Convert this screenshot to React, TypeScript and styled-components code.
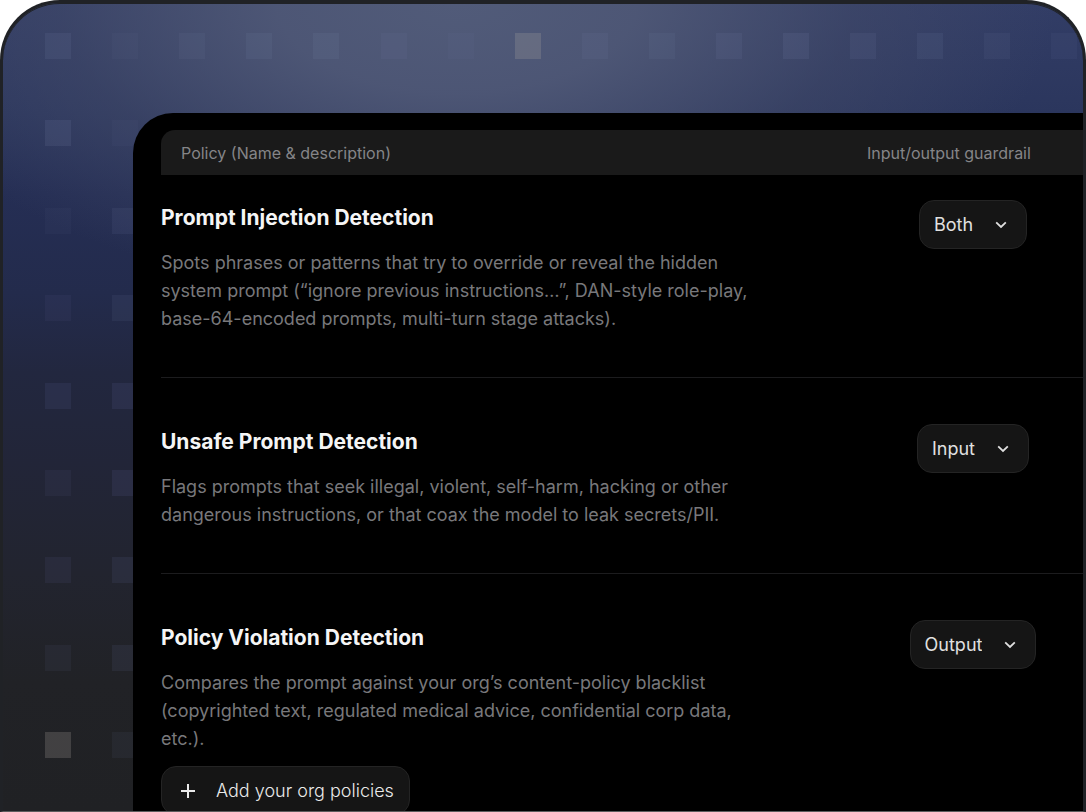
import React from "react";
import styled, { createGlobalStyle } from "styled-components";

const GlobalStyle = createGlobalStyle`
  * { box-sizing: border-box; }
  body {
    margin: 0;
    background: #ffffff;
    font-family: "Inter", "Liberation Sans", sans-serif;
  }
`;

const Card = styled.main`
  position: relative;
  height: 100vh;
  overflow: hidden;
  padding: 110px 0 0 130px;
  border: 3px solid #202226;
  border-bottom: 1px solid #5c5c5c;
  border-radius: 60px 60px 0 0;
  box-shadow: inset 0 1px 0 #202226;
  background:
    radial-gradient(ellipse 600px 300px at 42% 0, #515b79 0%, rgba(80, 89, 119, 0.9) 30%, rgba(68, 76, 106, 0.5) 66%, rgba(50, 60, 100, 0) 100%),
    linear-gradient(#323d66 0, #2b365d 110px, #252e54 190px, #232b4c 290px, #22273f 370px, #222538 460px, #22242f 570px, #212226 680px, #202124 100%);
`;

const Squares = styled.svg`
  position: absolute;
  inset: 0;
  width: 100%;
  height: 100%;
`;

const Panel = styled.section`
  position: relative;
  height: 100%;
  padding: 17px 0 0 28px;
  border-top-left-radius: 40px;
  background: #000000;
`;

const PolicyTable = styled.table`
  width: 100%;
  table-layout: fixed;
  border-collapse: separate;
  border-spacing: 0;
`;

const HeadCell = styled.th<{ $side?: boolean }>`
  width: ${(p) => (p.$side ? "220px" : "auto")};
  height: 45px;
  padding: ${(p) => (p.$side ? "0 0 0 4px" : "0 0 0 20px")};
  border-top-left-radius: ${(p) => (p.$side ? "0" : "14px")};
  background: #1a1a1a;
  color: #858588;
  font-size: 16px;
  font-weight: 400;
  line-height: 24px;
  text-align: left;
`;

const Cell = styled.td<{ $first: boolean; $last: boolean }>`
  padding: ${(p) => (p.$first ? "25px" : "46px")} 0 44px;
  border-bottom: ${(p) => (p.$last ? "0" : "1px solid #1c1c1e")};
  vertical-align: top;
`;

const ChoiceCell = styled(Cell)`
  text-align: center;
`;

const Title = styled.h2`
  margin: 4px 0 17px;
  color: #f5f5f5;
  font-size: 21px;
  font-weight: 650;
  line-height: 28px;
`;

const Description = styled.p`
  margin: 0;
  color: #78787b;
  font-size: 18px;
  font-weight: 400;
  line-height: 28px;
  white-space: pre-line;
`;

const SelectBox = styled.label`
  position: relative;
  display: inline-block;
  color: #e0e0e0;
`;

const Select = styled.select`
  appearance: none;
  field-sizing: content;
  display: block;
  height: 49px;
  padding: 0 53px 0 14px;
  border: 1px solid #242424;
  border-radius: 15px;
  background: #151515;
  color: inherit;
  font: 400 18px/28px "Inter", "Liberation Sans", sans-serif;
`;

const Chevron = styled.svg`
  position: absolute;
  top: 20px;
  right: 20px;
  pointer-events: none;
`;

const AddButton = styled.button`
  display: flex;
  align-items: center;
  gap: 20px;
  height: 49px;
  margin-top: 13px;
  padding: 0 15px 0 18px;
  border: 1px solid #242424;
  border-radius: 15px;
  background: #151515;
  color: #eaeaea;
  font: 300 18px/28px "Inter", "Liberation Sans", sans-serif;
`;

const squareSize = 26;
const topRow = [0.09, 0.04, 0.06, 0.07, 0.08, 0.05, 0.03, 0.14, 0.06, 0.06, 0.07, 0.09, 0.08, 0.08, 0.06, 0.05];
const sideRows = [
  [0.1, 0.03],
  [0.04, 0.07],
  [0.05, 0.07],
  [0.08, 0.09],
  [0.06, 0.09],
  [0.07, 0.08],
  [0.06, 0.08],
  [0.16, 0.06],
];

const policies = [
  {
    title: "Prompt Injection Detection",
    text: "Spots phrases or patterns that try to override or reveal the hidden\nsystem prompt (“ignore previous instructions…”, DAN-style role-play,\nbase-64-encoded prompts, multi-turn stage attacks).",
    value: "Both",
  },
  {
    title: "Unsafe Prompt Detection",
    text: "Flags prompts that seek illegal, violent, self-harm, hacking or other\ndangerous instructions, or that coax the model to leak secrets/PII.",
    value: "Input",
  },
  {
    title: "Policy Violation Detection",
    text: "Compares the prompt against your org’s content-policy blacklist\n(copyrighted text, regulated medical advice, confidential corp data,\netc.).",
    value: "Output",
    canAdd: true,
  },
];

function squareFill(row: number, column: number) {
  if (row === 8 && column === 0) return "#f0e8d8";
  if (row === 0 && column === 7) return "#f2e6c0";
  return row >= 4 ? "#8f94e0" : "#9aa4d0";
}

function BackgroundSquares() {
  return (
    <Squares aria-hidden="true">
      {[topRow, ...sideRows].map((row, r) =>
        row.map((opacity, c) => (
          <rect
            key={`${r}-${c}`}
            x={42 + Math.round(c * 67.1)}
            y={30 + Math.round(r * 87.4)}
            width={squareSize}
            height={squareSize}
            fill={squareFill(r, c)}
            opacity={opacity}
          />
        ))
      )}
    </Squares>
  );
}

function GuardrailSelect({ value, label }: { value: string; label: string }) {
  return (
    <SelectBox>
      <Select defaultValue={value} aria-label={label}>
        <option>Both</option>
        <option>Input</option>
        <option>Output</option>
      </Select>
      <Chevron width="12" height="10" viewBox="0 0 12 10" fill="none" stroke="currentColor" strokeWidth="1.8" aria-hidden="true">
        <path d="M1.2 2.3 6 6.9l4.8-4.6" />
      </Chevron>
    </SelectBox>
  );
}

export default function App() {
  return (
    <>
      <GlobalStyle />
      <Card>
        <BackgroundSquares />
        <Panel>
          <PolicyTable>
            <thead>
              <tr>
                <HeadCell scope="col">Policy (Name &amp; description)</HeadCell>
                <HeadCell scope="col" $side>Input/output guardrail</HeadCell>
              </tr>
            </thead>
            <tbody>
              {policies.map((policy, i) => {
                const place = { $first: i === 0, $last: i === policies.length - 1 };
                return (
                  <tr key={policy.title}>
                    <Cell {...place}>
                      <Title>{policy.title}</Title>
                      <Description>{policy.text}</Description>
                      {policy.canAdd && (
                        <AddButton type="button">
                          <svg width="16" height="16" viewBox="0 0 16 16" stroke="currentColor" strokeWidth="2" aria-hidden="true">
                            <path d="M8 1v14M1 8h14" />
                          </svg>
                          Add your org policies
                        </AddButton>
                      )}
                    </Cell>
                    <ChoiceCell {...place}>
                      <GuardrailSelect value={policy.value} label={`Guardrail for ${policy.title}`} />
                    </ChoiceCell>
                  </tr>
                );
              })}
            </tbody>
          </PolicyTable>
        </Panel>
      </Card>
    </>
  );
}
